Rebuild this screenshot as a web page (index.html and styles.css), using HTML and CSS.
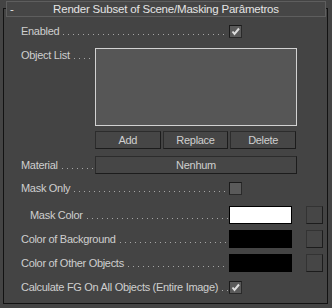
FILE: index.html
```html
<!DOCTYPE html>
<html lang="pt">

<head>
  <meta charset="UTF-8" />
  <title>Render Subset of Scene/Masking</title>
  <link rel="stylesheet" href="styles.css">
</head>

<body>
  <div class="rollout">
    <div class="rollout-header">
      <span class="toggle">-</span>
      <span class="rollout-title">Render Subset of Scene/Masking Parâmetros</span>
    </div>

    <div class="rollout-body">
      <div class="row row-enabled">
        <div class="lbl lbl-long"><span>Enabled</span><span class="dots"></span></div>
        <div class="check on"><svg viewBox="0 0 11 11"><polyline points="2.5,5.5 4.5,8 9,2.5" /></svg></div>
      </div>

      <div class="row row-list">
        <div class="lbl lbl-short lbl-top"><span>Object List</span><span class="dots"></span></div>
        <div class="object-list"></div>
      </div>

      <div class="list-buttons">
        <button class="btn">Add</button>
        <button class="btn">Replace</button>
        <button class="btn">Delete</button>
      </div>

      <div class="row row-material">
        <div class="lbl lbl-short"><span>Material</span><span class="dots"></span></div>
        <button class="btn btn-wide">Nenhum</button>
      </div>

      <div class="row row-mask">
        <div class="lbl lbl-long"><span>Mask Only</span><span class="dots"></span></div>
        <div class="check"></div>
      </div>

      <div class="row row-color row-first">
        <div class="lbl lbl-long lbl-indent"><span>Mask Color</span><span class="dots"></span></div>
        <div class="swatch white"></div>
        <div class="map-btn"></div>
      </div>

      <div class="row row-color">
        <div class="lbl lbl-long"><span>Color of Background</span><span class="dots"></span></div>
        <div class="swatch black"></div>
        <div class="map-btn"></div>
      </div>

      <div class="row row-color">
        <div class="lbl lbl-long"><span>Color of Other Objects</span><span class="dots"></span></div>
        <div class="swatch black"></div>
        <div class="map-btn"></div>
      </div>

      <div class="row row-calc">
        <div class="lbl lbl-long"><span>Calculate FG On All Objects (Entire Image)</span><span class="dots"></span></div>
        <div class="check on"><svg viewBox="0 0 11 11"><polyline points="2.5,5.5 4.5,8 9,2.5" /></svg></div>
      </div>
    </div>
  </div>
</body>

</html>
```

FILE: styles.css
```css
* {
  box-sizing: border-box;
  margin: 0;
  padding: 0;
}

body {
  width: 100%;
  height: 100vh;
  background: #444444;
  font-family: "Liberation Sans", Arial, sans-serif;
  font-size: 11px;
  letter-spacing: -0.3px;
  color: #cfcfcf;
}

/* Moldura do rollout */
.rollout {
  margin: 8px 4px 0 3px;
  height: 296px;
  border: 1px solid #121212;
}

.rollout-header {
  display: grid;
  grid-template-columns: 20px 1fr 20px;
  align-items: center;
  height: 16px;
  margin: -8px 1px 0 2px;
  background: #464646;
  border: 1px solid #5e5e5e;
  color: #e4e4e4;
  font-size: 11.5px;
  letter-spacing: -0.2px;
}

.toggle {
  padding-left: 3px;
  line-height: 12px;
}

.rollout-title {
  text-align: center;
  white-space: nowrap;
  line-height: 14px;
}

.rollout-body {
  padding: 8px 0 0 17px;
}

/* Linhas */
.row {
  display: flex;
  align-items: center;
}

.lbl {
  display: flex;
  align-items: flex-end;
  height: 13px;
  line-height: 13px;
  white-space: nowrap;
}

.lbl-long {
  width: 208px;
}

.lbl-short {
  width: 74px;
}

.lbl-indent {
  padding-left: 9px;
}

.dots {
  flex: 1;
  height: 1px;
  margin: 0 1px 3px 4px;
  background: linear-gradient(to right, #a6a6a6 1px, transparent 1px);
  background-size: 5px 1px;
}

.row-list {
  align-items: flex-start;
  margin-top: 10px;
}

.lbl-top {
  margin-top: 1px;
}

.object-list {
  width: 202px;
  height: 78px;
  background: #565656;
  border: 1px solid #d2d2d2;
}

.list-buttons {
  display: grid;
  grid-template-columns: repeat(3, 1fr);
  gap: 2px;
  width: 201px;
  margin: 5px 0 0 74px;
}

.btn {
  height: 18px;
  background: #464646;
  border: 1px solid #2c2c2c;
  border-right-color: #1c1c1c;
  border-bottom-color: #1c1c1c;
  color: #cfcfcf;
  font-family: inherit;
  font-size: 11px;
  letter-spacing: inherit;
}

.btn-wide {
  width: 202px;
}

.row-material {
  margin-top: 7px;
}

/* Checkbox */
.check {
  width: 13px;
  height: 13px;
  background: #5a5a5a;
  border: 1px solid #2a2a2a;
  border-top-color: #1a1a1a;
  border-left-color: #1a1a1a;
}

.check svg {
  display: block;
  width: 11px;
  height: 11px;
}

.check polyline {
  fill: none;
  stroke: #dedede;
  stroke-width: 2;
}

.row-enabled {
  height: 13px;
}

.row-mask {
  margin-top: 8px;
}

/* Cores */
.row-color {
  margin-top: 6px;
}

.row-first {
  margin-top: 11px;
}

.swatch {
  width: 63px;
  height: 18px;
  border: 1px solid #000;
}

.swatch.white {
  background: #ffffff;
}

.swatch.black {
  background: #000000;
}

.map-btn {
  width: 17px;
  height: 18px;
  margin-left: 14px;
  background: #464646;
  border: 1px solid #333;
  border-right-color: #1c1c1c;
  border-bottom-color: #1c1c1c;
}

.row-calc {
  margin-top: 9px;
}
```
